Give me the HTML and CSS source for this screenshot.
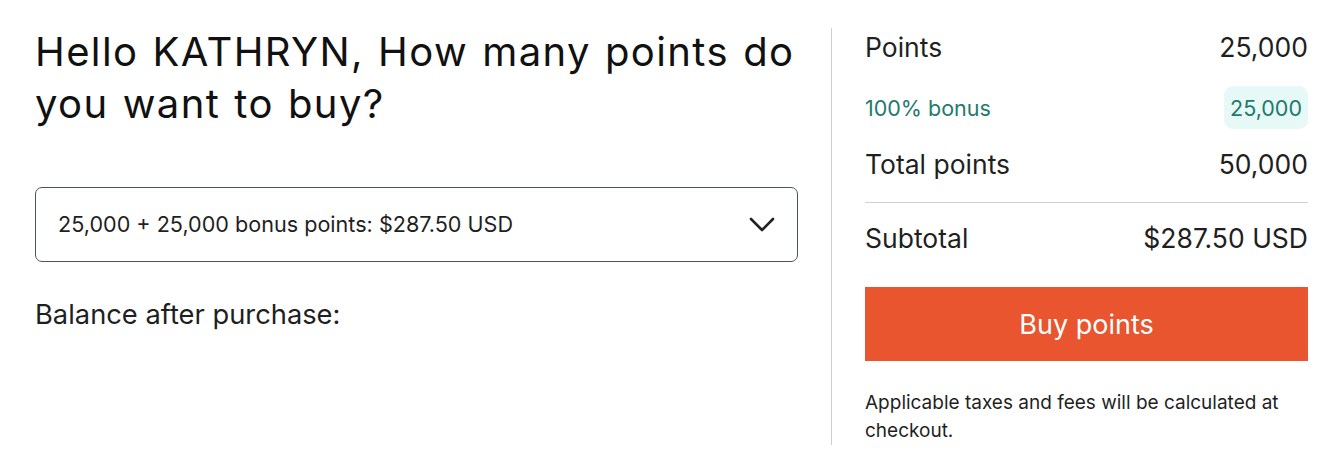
FILE: index.html
```html
<!DOCTYPE html>
<html lang="en">
<head>
<meta charset="utf-8">
<link rel="stylesheet" href="styles.css">
</head>
<body>
<div class="page">
  <div class="left">
    <h1 class="title">Hello KATHRYN, How many points do you want to buy?</h1>
    <div class="select">
      <span class="select-text">25,000 + 25,000 bonus points: $287.50 USD</span>
      <svg class="chev" width="26" height="16" viewBox="0 0 26 16"><path d="M2 2 L13 13 L24 2" fill="none" stroke="#222" stroke-width="2.6" stroke-linecap="round" stroke-linejoin="round"/></svg>
    </div>
    <p class="balance">Balance after purchase:</p>
  </div>
  <div class="right">
    <div class="row row-points"><span>Points</span><span>25,000</span></div>
    <div class="row row-bonus"><span>100% bonus</span><span class="badge">25,000</span></div>
    <div class="row row-total"><span>Total points</span><span>50,000</span></div>
    <hr class="sep">
    <div class="row row-sub"><span>Subtotal</span><span>$287.50 USD</span></div>
    <button class="buy">Buy points</button>
    <p class="note">Applicable taxes and fees will be calculated at checkout.</p>
  </div>
</div>
</body>
</html>
```
FILE: styles.css
```css
html, body { margin: 0; padding: 0; background: #fff; }
body { color: #1f1f1f; font-family: Inter, "Noto Sans", sans-serif; }
.page {
  display: flex;
  padding: 28px 31px 0 35px;
  height: 438px;
}
.left {
  width: 763px;
}
.title {
  margin: -2px 0 0 0;
  font-weight: 400;
  font-size: 40px;
  letter-spacing: 1.4px;
  word-spacing: 1.5px;
  line-height: 52px;
  color: #111;
}
.select {
  margin-top: 57px;
  height: 73px;
  border: 1px solid #4b5264;
  border-radius: 7px;
  display: flex;
  align-items: center;
  justify-content: space-between;
  padding: 0 22px 0 22px;
}
.select-text { font-size: 21.6px; margin-top: -2px; }
.chev { display: block; }
.balance {
  margin: 38px 0 0 0;
  font-size: 27.3px;
  line-height: 30px;
}
.right {
  margin-left: 33px;
  border-left: 1px solid #cfcfcf;
  padding-left: 33px;
  width: 443px;
  height: 417px;
  display: flex;
  flex-direction: column;
}
.row {
  display: flex;
  justify-content: space-between;
  align-items: center;
  font-size: 26.5px;
  height: 38px;
}
.row-bonus {
  margin-top: 20px;
  height: 43px;
  font-size: 21.5px;
  color: #237a6d;
}
.badge {
  background: #e6f9f6;
  border-radius: 9px;
  padding: 0 6px;
  height: 43px;
  display: flex;
  align-items: center;
}
.row-total { margin-top: 16px; }
.sep {
  margin: 19px 0 0 0;
  border: 0;
  border-top: 1px solid #cfd1d1;
  width: 100%;
}
.row-sub { margin-top: 16px; }
.buy {
  margin-top: 30px;
  height: 74px;
  border: 0;
  background: #e8552e;
  color: #fff;
  font-family: Inter, "Noto Sans", sans-serif;
  font-size: 27px;
  width: 100%;
}
.note {
  margin: 28px 0 0 0;
  font-size: 19px;
  line-height: 28px;
}
```
